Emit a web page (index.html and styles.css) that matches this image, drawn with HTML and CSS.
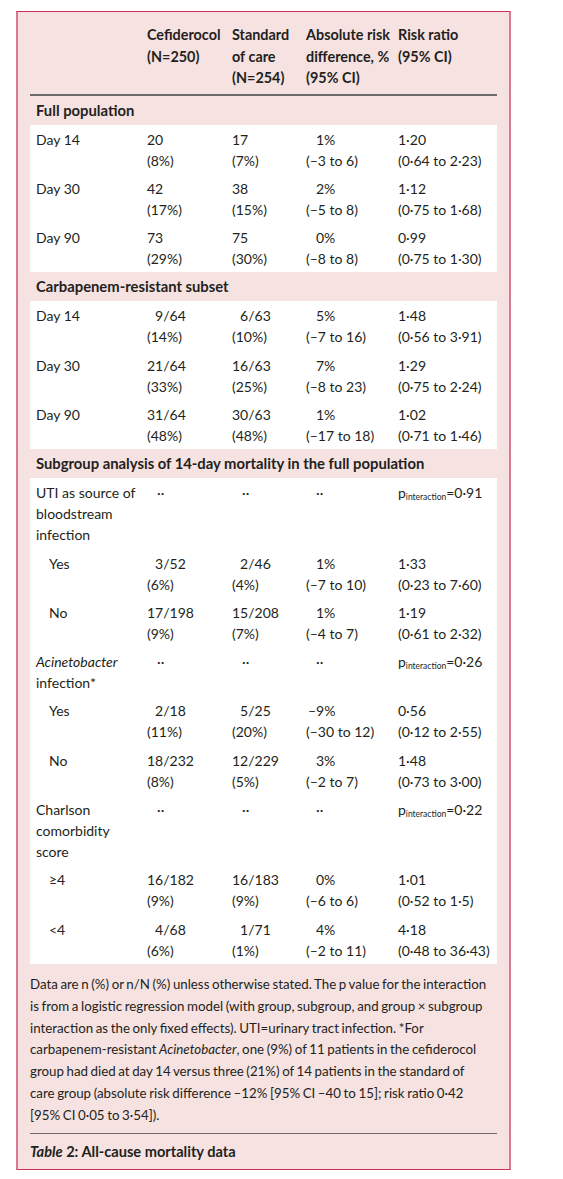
FILE: index.html
```html
<!DOCTYPE html>
<html lang="en">
<head>
<meta charset="utf-8">
<title>Table 2: All-cause mortality data</title>
<link rel="stylesheet" href="styles.css">
</head>
<body>
<figure class="card">
  <div class="grid head">
    <div></div>
    <div>Cefiderocol<br>(N=250)</div>
    <div>Standard<br>of care<br>(N=254)</div>
    <div>Absolute risk<br>difference, %<br>(95% CI)</div>
    <div>Risk ratio<br>(95% CI)</div>
  </div>

  <div class="section">Full population</div>
  <div class="panel">
    <div class="grid row"><div>Day 14</div><div>20<br>(8%)</div><div>17<br>(7%)</div><div><span class="ind">1%</span><br>(–3 to 6)</div><div>1·20<br>(0·64 to 2·23)</div></div>
    <div class="grid row"><div>Day 30</div><div>42<br>(17%)</div><div>38<br>(15%)</div><div><span class="ind">2%</span><br>(–5 to 8)</div><div>1·12<br>(0·75 to 1·68)</div></div>
    <div class="grid row"><div>Day 90</div><div>73<br>(29%)</div><div>75<br>(30%)</div><div><span class="ind">0%</span><br>(–8 to 8)</div><div>0·99<br>(0·75 to 1·30)</div></div>
  </div>

  <div class="section">Carbapenem-resistant subset</div>
  <div class="panel">
    <div class="grid row"><div>Day 14</div><div>&#8199;9/64<br>(14%)</div><div>&#8199;6/63<br>(10%)</div><div><span class="ind">5%</span><br>(–7 to 16)</div><div>1·48<br>(0·56 to 3·91)</div></div>
    <div class="grid row"><div>Day 30</div><div>21/64<br>(33%)</div><div>16/63<br>(25%)</div><div><span class="ind">7%</span><br>(–8 to 23)</div><div>1·29<br>(0·75 to 2·24)</div></div>
    <div class="grid row"><div>Day 90</div><div>31/64<br>(48%)</div><div>30/63<br>(48%)</div><div><span class="ind">1%</span><br>(–17 to 18)</div><div>1·02<br>(0·71 to 1·46)</div></div>
  </div>

  <div class="section">Subgroup analysis of 14-day mortality in the full population</div>
  <div class="panel">
    <div class="grid row"><div>UTI as source of bloodstream infection</div><div class="dots">··</div><div class="dots">··</div><div class="dots">··</div><div>p<sub>interaction</sub>=0·91</div></div>
    <div class="grid row sub"><div>Yes</div><div>&#8199;3/52<br>(6%)</div><div>&#8199;2/46<br>(4%)</div><div><span class="ind">1%</span><br>(–7 to 10)</div><div>1·33<br>(0·23 to 7·60)</div></div>
    <div class="grid row sub"><div>No</div><div>17/198<br>(9%)</div><div>15/208<br>(7%)</div><div><span class="ind">1%</span><br>(–4 to 7)</div><div>1·19<br>(0·61 to 2·32)</div></div>
    <div class="grid row"><div><i>Acinetobacter</i><br>infection*</div><div class="dots">··</div><div class="dots">··</div><div class="dots">··</div><div>p<sub>interaction</sub>=0·26</div></div>
    <div class="grid row sub"><div>Yes</div><div>&#8199;2/18<br>(11%)</div><div>&#8199;5/25<br>(20%)</div><div><span class="neg">–9%</span><br>(–30 to 12)</div><div>0·56<br>(0·12 to 2·55)</div></div>
    <div class="grid row sub"><div>No</div><div>18/232<br>(8%)</div><div>12/229<br>(5%)</div><div><span class="ind">3%</span><br>(–2 to 7)</div><div>1·48<br>(0·73 to 3·00)</div></div>
    <div class="grid row"><div>Charlson<br>comorbidity<br>score</div><div class="dots">··</div><div class="dots">··</div><div class="dots">··</div><div>p<sub>interaction</sub>=0·22</div></div>
    <div class="grid row sub"><div>≥4</div><div>16/182<br>(9%)</div><div>16/183<br>(9%)</div><div><span class="ind">0%</span><br>(–6 to 6)</div><div>1·01<br>(0·52 to 1·5)</div></div>
    <div class="grid row sub"><div>&lt;4</div><div>&#8199;4/68<br>(6%)</div><div>&#8199;1/71<br>(1%)</div><div><span class="ind">4%</span><br>(–2 to 11)</div><div>4·18<br>(0·48 to 36·43)</div></div>
  </div>

  <p class="note">Data are n (%) or n/N (%) unless otherwise stated. The p value for the interaction<br>is from a logistic regression model (with group, subgroup, and group × subgroup<br>interaction as the only fixed effects). UTI=urinary tract infection. *For<br>carbapenem-resistant <i>Acinetobacter</i>, one (9%) of 11 patients in the cefiderocol<br>group had died at day 14 versus three (21%) of 14 patients in the standard of<br>care group (absolute risk difference –12% [95% CI –40 to 15]; risk ratio 0·42<br>[95% CI 0·05 to 3·54]).</p>

  <figcaption class="caption"><i>Table</i> 2: All-cause mortality data</figcaption>
</figure>
</body>
</html>
```

FILE: styles.css
```css
* { box-sizing: border-box; }

body {
  margin: 0;
  background: #ffffff;
  font-family: Lato, "Open Sans", sans-serif;
  color: #231f20;
}

.card {
  margin: 11px 0 0 16px;
  width: 495px;
  padding: 12px 12px 7px;
  background: #f6e2e1;
  border-top: 1px solid #cc2d5c;
  border-bottom: 1px solid #cc2d5c;
  border-left: 2px solid #d97a94;
  border-right: 2px solid #d97a94;
  font-size: 14px;
  line-height: 21px;
}

.grid {
  display: grid;
  grid-template-columns: 111px 85px 74px 92px 1fr;
  font-variant-numeric: tabular-nums;
}

.head {
  padding: 0 0 5px 6px;
  line-height: 21.5px;
  font-weight: 700;
  font-size: 14.4px;
  border-bottom: 2px solid #6e6a6a;
}

.section {
  padding: 4px 6px 4px;
  font-weight: 700;
  font-size: 14.8px;
}

.panel {
  background: #ffffff;
}

.row {
  padding: 4px 0 3.3px 6px;
}

.row.sub > div:first-child {
  padding-left: 13px;
}

.ind { padding-left: 10px; }
.neg { padding-left: 2px; }

.dots { padding-left: 10px; }

sub {
  font-size: 8.5px;
  line-height: 0;
  vertical-align: -2px;
}

.note {
  margin: 10px 0 0;
  font-size: 13.3px;
  word-spacing: -0.8px;
  white-space: nowrap;
  line-height: 21.8px;
  padding-bottom: 6px;
  border-bottom: 1.5px solid #6e6a6a;
}

.caption {
  margin: 0;
  padding-top: 7px;
  font-weight: 700;
  font-size: 14.6px;
}
```
